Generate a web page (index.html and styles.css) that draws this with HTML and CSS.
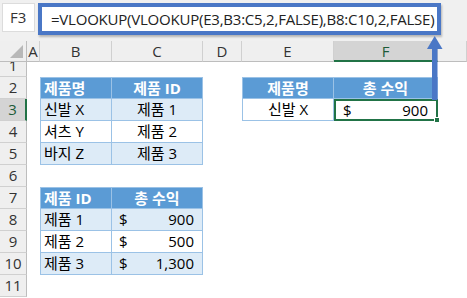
FILE: index.html
```html
<!DOCTYPE html>
<html lang="ko">
<head>
<meta charset="utf-8">
<link rel="stylesheet" href="styles.css">
</head>
<body>
<div class="app">
  <div class="toolbar">
    <div class="namebox">F3</div>
    <div class="formula">=VLOOKUP(VLOOKUP(E3,B3:C5,2,FALSE),B8:C10,2,FALSE)</div>
  </div>
  <div class="sheet">
    <div class="corner"><span class="tri"></span></div>
    <div class="ch">A</div><div class="ch">B</div><div class="ch">C</div><div class="ch">D</div><div class="ch">E</div><div class="ch sel">F</div><div class="ch"></div>

    <div class="rh r1"><span>1</span></div>
    <div></div><div></div><div></div><div></div><div></div><div></div><div></div>

    <div class="rh">2</div>
    <div></div>
    <div class="th first top l">제품명</div>
    <div class="th top m">제품 ID</div>
    <div></div>
    <div class="th first top m">제품명</div>
    <div class="th top m">총 수익</div>
    <div></div>

    <div class="rh sel">3</div>
    <div></div>
    <div class="td alt first l">신발 X</div>
    <div class="td alt m">제품 1</div>
    <div></div>
    <div class="td first m">신발 X</div>
    <div class="td acc active"><span>$</span><span>900</span><i class="handle"></i></div>
    <div></div>

    <div class="rh">4</div>
    <div></div>
    <div class="td first l">셔츠 Y</div>
    <div class="td m">제품 2</div>
    <div></div><div></div><div></div><div></div>

    <div class="rh">5</div>
    <div></div>
    <div class="td alt first l">바지 Z</div>
    <div class="td alt m">제품 3</div>
    <div></div><div></div><div></div><div></div>

    <div class="rh">6</div>
    <div></div><div></div><div></div><div></div><div></div><div></div><div></div>

    <div class="rh">7</div>
    <div></div>
    <div class="th first top l">제품 ID</div>
    <div class="th top m">총 수익</div>
    <div></div><div></div><div></div><div></div>

    <div class="rh">8</div>
    <div></div>
    <div class="td alt first l">제품 1</div>
    <div class="td alt acc"><span>$</span><span>900</span></div>
    <div></div><div></div><div></div><div></div>

    <div class="rh">9</div>
    <div></div>
    <div class="td first l">제품 2</div>
    <div class="td acc"><span>$</span><span>500</span></div>
    <div></div><div></div><div></div><div></div>

    <div class="rh">10</div>
    <div></div>
    <div class="td alt first l">제품 3</div>
    <div class="td alt acc"><span>$</span><span>1,300</span></div>
    <div></div><div></div><div></div><div></div>

    <div class="rh">11</div>
    <div></div><div></div><div></div><div></div><div></div><div></div><div></div>
  </div>
  <svg class="arrow" width="467" height="298" viewBox="0 0 467 298">
    <rect x="432" y="46" width="5.5" height="54" fill="#4a77c6"/>
    <polygon points="434.7,36 427,49 442.5,49" fill="#4a77c6"/>
  </svg>
</div>
</body>
</html>
```

FILE: styles.css
```css
* { box-sizing: border-box; }
html, body { margin: 0; padding: 0; background: #fff; }
body { width: 467px; height: 298px; overflow: hidden; }
.app {
  position: relative;
  width: 467px;
  height: 298px;
  font-family: "Open Sans", "Noto Sans CJK KR", sans-serif;
  color: #000;
}
.toolbar {
  height: 41px;
  background: #f0f0f0;
  display: flex;
  align-items: flex-start;
  padding: 3px 0 0 2px;
}
.namebox {
  width: 33px;
  height: 29px;
  background: #fff;
  border: 1px solid #dcdcdc;
  font-size: 15px;
  color: #333;
  padding-left: 7px;
  line-height: 27px;
}
.formula {
  margin-left: 3px;
  width: 403px;
  height: 32px;
  background: #fff;
  border: 4px solid #4a77c6;
  box-shadow: 1px 2px 2px rgba(0,0,0,0.25);
  font-size: 15px;
  line-height: 24px;
  padding-left: 9px;
  white-space: nowrap;
  overflow: hidden;
  color: #222;
  letter-spacing: -0.22px;
}
.sheet {
  display: grid;
  grid-template-columns: 27px 13px 72px 91px 39px 92px 104px 29px;
  grid-template-rows: 21px 15px repeat(10, 22px);
  font-size: 15px;
}
.corner {
  background: #efefef;
  border-right: 1px solid #bdbdbd;
  border-bottom: 1px solid #bdbdbd;
  position: relative;
}
.tri {
  position: absolute;
  right: 3px;
  bottom: 3px;
  width: 0;
  height: 0;
  border-left: 13px solid transparent;
  border-bottom: 13px solid #b8b8b8;
}
.ch {
  background: #efefef;
  border-right: 1px solid #d0d0d0;
  border-bottom: 1px solid #bdbdbd;
  text-align: center;
  line-height: 20px;
  color: #333;
}
.ch.sel {
  background: #d4d4d4;
  border-bottom: 2px solid #217346;
  color: #1d5b38;
}
.rh {
  background: #efefef;
  border-right: 1px solid #bdbdbd;
  border-bottom: 1px solid #d0d0d0;
  text-align: center;
  line-height: 21px;
  color: #333;
}
.rh.sel {
  background: #d4d4d4;
  border-right: 2px solid #217346;
  color: #1d5b38;
}
.rh.r1 {
  overflow: hidden;
  display: flex;
  flex-direction: column;
  justify-content: flex-end;
}
.rh.r1 span { display: block; height: 21px; flex: none; }
.th, .td {
  border-right: 1px solid #9bc2e6;
  border-bottom: 1px solid #9bc2e6;
  line-height: 21px;
  white-space: nowrap;
}
.th {
  background: #5b9bd5;
  color: #fff;
  font-weight: bold;
}
.td { background: #fff; }
.td.alt { background: #ddebf7; }
.first { border-left: 1px solid #9bc2e6; }
.top { border-top: 1px solid #9bc2e6; }
.top { line-height: 20px; }
.l { padding-left: 3px; }
.m { text-align: center; }
.acc {
  display: flex;
  justify-content: space-between;
  padding: 0 8px 0 7px;
}
.active {
  position: relative;
  border: 2px solid #217346;
  line-height: 18px;
}
.handle {
  position: absolute;
  right: -4px;
  bottom: -4px;
  width: 6px;
  height: 6px;
  background: #217346;
  border: 1px solid #fff;
}
.arrow {
  position: absolute;
  left: 0;
  top: 0;
  pointer-events: none;
}
```
